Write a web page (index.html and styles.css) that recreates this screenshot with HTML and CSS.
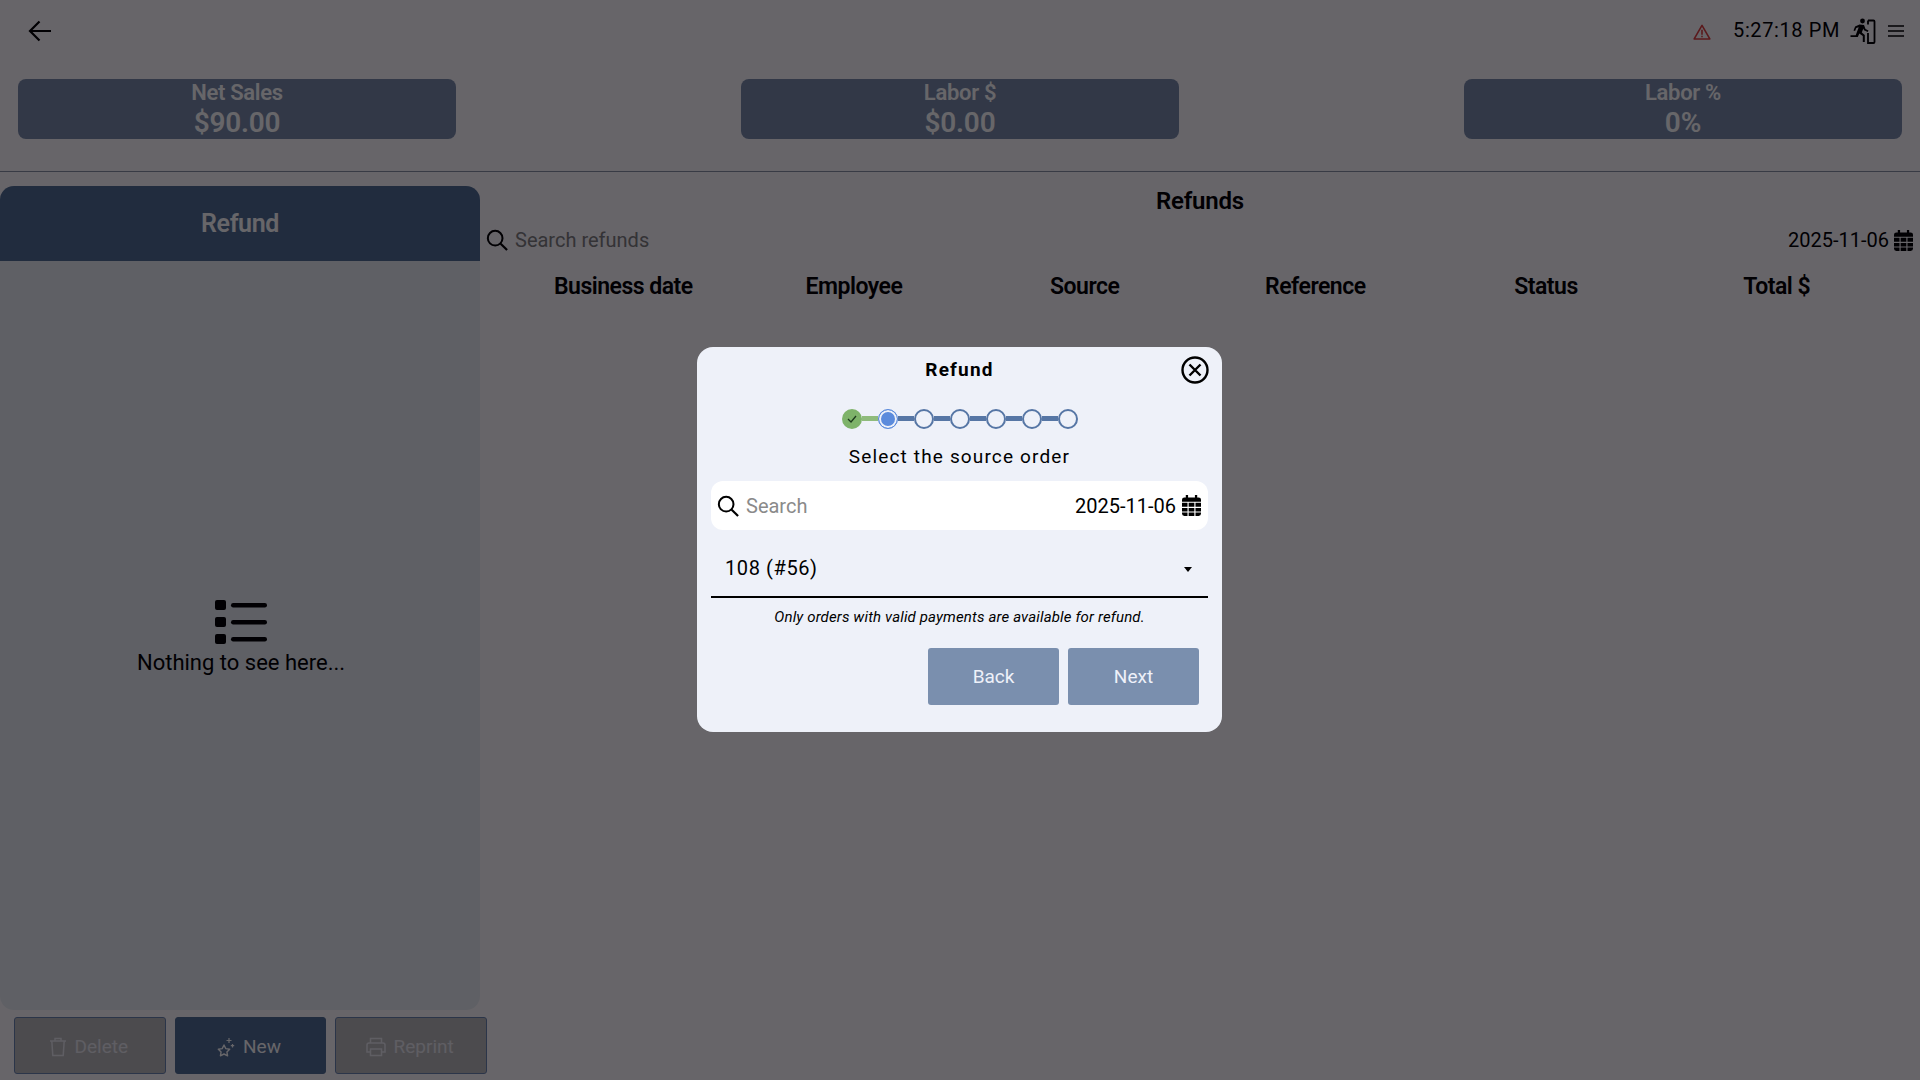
FILE: index.html
```html
<!DOCTYPE html>
<html>
<head>
<title>Refunds</title>
<link rel="stylesheet" href="styles.css">
</head>
<body>
<svg class="defs" width="0" height="0">
    <symbol id="search" viewBox="0 0 24 24"><circle cx="10" cy="10" r="8" fill="none" stroke="currentColor" stroke-width="2.2"/><path d="M16 16l7 7" fill="none" stroke="currentColor" stroke-width="2.4"/></symbol>
    <symbol id="calendar" viewBox="0 0 20 22"><path d="M4 0h2.400v2.500h7.200V0H16v2.500h1.500A2.500 2.500 0 0 1 20 5v2H0V5a2.500 2.500 0 0 1 2.500-2.500H4z"/><path d="M0 8.200h5.800v4.200H0zM7 8.200h6v4.200H7zM14.200 8.200H20v4.200h-5.800zM0 13.500h5.800v3.700H0zM7 13.500h6v3.700H7zM14.200 13.500H20v3.700h-5.800zM0 18.300h5.800V22H2.500A2.500 2.500 0 0 1 0 19.500zM7 18.300h6V22H7zM14.200 18.300H20v1.200a2.500 2.500 0 0 1-2.500 2.500h-3.300z"/></symbol>
</svg>

<div class="app">
    <header class="topbar">
        <svg class="back" width="24" height="22" viewBox="0 0 24 22"><path d="M23 11H2M11.500 1.500L2 11l9.500 9.500" fill="none" stroke="#000" stroke-width="2.200"/></svg>
        <div class="status">
            <svg class="warn" width="18" height="16" viewBox="0 0 20 18"><path d="M10 1.500L1.200 16.800h17.600z" fill="none" stroke="#e04040" stroke-width="1.800" stroke-linejoin="round"/><path d="M10 6.500v5.500M10 13.200v1.600" stroke="#e04040" stroke-width="1.800"/></svg>
            <span class="clock">5:27:18 PM</span>
            <svg class="exit" width="28" height="26" viewBox="0 0 28 26"><path d="M20 2.500h5.500a1 1 0 0 1 1 1v20.500a1 1 0 0 1-1 1H20v-1.500M20 2.500v4M20 15v9" fill="none" stroke="#000" stroke-width="1.800"/><circle cx="14.500" cy="3" r="2.400"/><path d="M11.500 6.500l4.500.5 1.500 4 3 1.500-.8 1.400-3.700-1.700-.7-1.600-1.500 4 3 2.500v7h-2v-6l-3.500-2.500-1.500 3.500H2.500v-1.800h5.200l3-8-2.400.8-1.200 3-1.600-.6 1.600-4z"/></svg>
            <svg class="menu" width="16" height="12" viewBox="0 0 16 12"><path d="M0 1h16M0 6h16M0 11h16" stroke="#000" stroke-width="1.500"/></svg>
        </div>
    </header>

    <section class="stats">
        <div class="stat"><div class="stat-label">Net Sales</div><div class="stat-value">$90.00</div></div>
        <div class="stat"><div class="stat-label">Labor $</div><div class="stat-value">$0.00</div></div>
        <div class="stat"><div class="stat-label">Labor %</div><div class="stat-value">0%</div></div>
    </section>

    <div class="main">
        <aside class="side">
            <div class="panel">
                <div class="panel-head">Refund</div>
                <div class="empty">
                    <svg class="empty-icon" width="52" height="44" viewBox="0 0 52 44"><rect x="0" y="0" width="11" height="10" rx="2"/><rect x="0" y="17" width="11" height="10" rx="2"/><rect x="0" y="34" width="11" height="10" rx="2"/><rect x="16" y="3" width="36" height="4.500" rx="2.200"/><rect x="16" y="20" width="36" height="4.500" rx="2.200"/><rect x="16" y="37" width="36" height="4.500" rx="2.200"/></svg>
                    <div class="empty-text">Nothing to see here...</div>
                </div>
            </div>
            <div class="actions">
                <button class="act">
                    <svg width="18" height="20" viewBox="0 0 18 20"><path d="M1 4h16M6 4V1.500h6V4M2.800 4l1 14.500h10.400l1-14.500" fill="none" stroke="currentColor" stroke-width="1.500"/></svg>
                    Delete
                </button>
                <button class="act act-main">
                    <svg width="18" height="20" viewBox="0 0 18 20"><path d="M7 8l1.800 3.600 3.900.6-2.800 2.700.7 3.900L7 17l-3.600 1.800.7-3.900-2.800-2.700 3.900-.6z" fill="none" stroke="currentColor" stroke-width="1.400" stroke-linejoin="round"/><path d="M12 1v5M9.500 3.500h5M15.500 7v3.500M13.800 8.700h3.400" stroke="currentColor" stroke-width="1.200"/></svg>
                    New
                </button>
                <button class="act">
                    <svg width="20" height="20" viewBox="0 0 20 20"><path d="M4.500 6V1.500h11V6M4.500 15H1V8a2 2 0 0 1 2-2h14a2 2 0 0 1 2 2v7h-3.500M4.500 12h11v6.500h-11z" fill="none" stroke="currentColor" stroke-width="1.500"/></svg>
                    Reprint
                </button>
            </div>
        </aside>

        <section class="refunds">
            <h2 class="refunds-title">Refunds</h2>
            <div class="filter">
                <svg class="ico-search"><use href="#search"/></svg>
                <span class="filter-text">Search refunds</span>
                <span class="filter-date">2025-11-06</span>
                <svg class="ico-cal"><use href="#calendar"/></svg>
            </div>
            <div class="cols">
                <div>Business date</div>
                <div>Employee</div>
                <div>Source</div>
                <div>Reference</div>
                <div>Status</div>
                <div>Total $</div>
            </div>
        </section>
    </div>
</div>

<div class="overlay">
    <div class="modal">
        <div class="modal-head">
            <span class="modal-title">Refund</span>
            <svg class="close" width="28" height="28" viewBox="0 0 28 28"><circle cx="14" cy="14" r="12.500" fill="none" stroke="#000" stroke-width="2.400"/><path d="M8.500 8.500l11 11M19.500 8.500l-11 11" stroke="#000" stroke-width="2.400"/></svg>
        </div>
        <div class="stepper">
            <span class="step step-done"><svg width="10" height="8" viewBox="0 0 10 8"><path d="M1 4l3 3 5-6" fill="none" stroke="#1c3a1c" stroke-width="1.300"/></svg></span>
            <span class="link link-done"></span>
            <span class="step step-now"></span>
            <span class="link"></span>
            <span class="step"></span>
            <span class="link"></span>
            <span class="step"></span>
            <span class="link"></span>
            <span class="step"></span>
            <span class="link"></span>
            <span class="step"></span>
            <span class="link"></span>
            <span class="step"></span>
        </div>
        <div class="modal-sub">Select the source order</div>
        <div class="searchbox">
            <svg class="ico-search"><use href="#search"/></svg>
            <span class="searchbox-text">Search</span>
            <span class="searchbox-date">2025-11-06</span>
            <svg class="ico-cal"><use href="#calendar"/></svg>
        </div>
        <div class="select">
            <span>108 (#56)</span>
            <span class="caret"></span>
        </div>
        <div class="note">Only orders with valid payments are available for refund.</div>
        <div class="modal-btns">
            <button class="btn">Back</button>
            <button class="btn">Next</button>
        </div>
    </div>
</div>
</body>
</html>
```

FILE: styles.css
```css
html, body{
    margin: 0;
    height: 100%;
}
body{
    background-color: #fffcff;
    color: #000;
    font-family: Roboto, "Liberation Sans", sans-serif;
    overflow: hidden;
}
.defs{
    position: absolute;
}
.app{
    height: 1080px;
    display: flex;
    flex-direction: column;
}

.topbar{
    height: 61px;
    padding: 0 16px 0 28px;
    display: flex;
    align-items: center;
    justify-content: space-between;
}
.back{
    margin-top: 1px;
}
.status{
    display: flex;
    align-items: center;
}
.warn{
    margin-right: 22px;
    margin-top: 2px;
}
.clock{
    font-size: 20px;
    letter-spacing: 0.6px;
    margin-right: 8px;
    margin-top: -1px;
}
.exit{
    margin-top: 1px;
    margin-right: 12px;
}

.stats{
    margin-top: 18px;
    padding: 0 18px 32px;
    display: flex;
    justify-content: space-between;
    border-bottom: 1px solid #8a93a6;
}
.stat{
    width: 438px;
    height: 60px;
    box-sizing: border-box;
    padding-top: 1px;
    border-radius: 8px;
    background-color: #7a8caa;
    color: #fff;
    text-align: center;
    font-weight: 600;
}
.stat-label{
    font-size: 22px;
    line-height: 26px;
    letter-spacing: -0.3px;
}
.stat-value{
    font-size: 28px;
    line-height: 33px;
    letter-spacing: -0.2px;
}

.main{
    flex: 1;
    display: flex;
    min-height: 0;
    padding-top: 14px;
}
.side{
    width: 480px;
    flex-shrink: 0;
    display: flex;
    flex-direction: column;
}
.panel{
    height: 824px;
    background-color: #ecf1f5;
    border-radius: 14px;
    display: flex;
    flex-direction: column;
}
.panel-head{
    height: 75px;
    line-height: 75px;
    background-color: #506e94;
    color: #fff;
    border-radius: 14px 14px 0 0;
    text-align: center;
    font-size: 25px;
    font-weight: 600;
    letter-spacing: -0.4px;
}
.empty{
    flex: 1;
    display: flex;
    flex-direction: column;
    align-items: center;
    padding-top: 339px;
}
.empty-icon{
    margin-left: 2px;
}
.empty-text{
    font-size: 22px;
    line-height: 27px;
    margin: 5px 0 0 2px;
}
.actions{
    width: 473px;
    margin: 7px 0 0 14px;
    display: flex;
    gap: 9px;
    flex-shrink: 0;
}
.act{
    flex: 1;
    height: 57px;
    padding: 2px 3px 0 0;
    border: 1px solid #6a85b0;
    border-radius: 3px;
    background-color: #bcbcbc;
    color: #eaeaf0;
    font-family: inherit;
    font-size: 19px;
    display: flex;
    align-items: center;
    justify-content: center;
    gap: 8px;
}
.act-main{
    background-color: #506e94;
    border-color: #506e94;
    color: #fff;
}

.refunds{
    flex: 1;
    padding: 0 6px;
    min-width: 0;
}
.refunds-title{
    margin: 0;
    padding-top: 1px;
    text-align: center;
    font-size: 24px;
    font-weight: 600;
    line-height: 28px;
    letter-spacing: -0.2px;
}
.filter{
    margin-top: 11px;
    padding-right: 1px;
    display: flex;
    align-items: center;
    height: 28px;
}
.ico-search{
    width: 22px;
    height: 22px;
    flex-shrink: 0;
}
.ico-cal{
    width: 19px;
    height: 21px;
    flex-shrink: 0;
}
.filter-text{
    flex: 1;
    margin-left: 7px;
    font-size: 20px;
    color: #808080;
}
.filter-date{
    font-size: 20px;
    margin-right: 5px;
}
.cols{
    margin-top: 19px;
    padding: 0 22px;
    display: grid;
    grid-template-columns: repeat(6, 1fr);
    text-align: center;
    font-size: 23px;
    font-weight: 600;
    line-height: 28px;
    letter-spacing: -0.5px;
}

.overlay{
    position: absolute;
    top: 0;
    left: 0;
    width: 100%;
    height: 100%;
    box-sizing: border-box;
    padding: 0 1px 2px 0;
    background-color: rgba(2, 0, 5, 0.6);
    display: flex;
    align-items: center;
    justify-content: center;
}
.modal{
    width: 525px;
    height: 385px;
    box-sizing: border-box;
    padding: 8px 14px 0;
    background-color: #eef1f9;
    border-radius: 16px;
}
.modal-head{
    height: 28px;
    display: flex;
    align-items: center;
    justify-content: center;
    position: relative;
}
.modal-title{
    font-size: 19px;
    font-weight: 700;
    letter-spacing: 1.2px;
    padding-top: 1px;
}
.close{
    position: absolute;
    right: -1px;
    top: 1px;
}
.stepper{
    margin-top: 26px;
    display: flex;
    align-items: center;
    justify-content: center;
    height: 20px;
}
.step{
    box-sizing: border-box;
    width: 20px;
    height: 20px;
    border: 2px solid #5676a5;
    border-radius: 50%;
    flex-shrink: 0;
    display: flex;
    align-items: center;
    justify-content: center;
}
.step-done{
    background-color: #7eb36a;
    border-color: #7eb36a;
}
.step-now{
    border: 1px solid #5b8bdc;
    background-color: #5b8bdc;
    box-shadow: inset 0 0 0 2px #eef1f9;
}
.link{
    width: 16px;
    height: 5px;
    background-color: #5676a5;
}
.link-done{
    background-color: #8fbb7c;
}
.modal-sub{
    margin-top: 16px;
    text-align: center;
    font-size: 19px;
    line-height: 23px;
    letter-spacing: 1.15px;
}
.searchbox{
    margin-top: 13px;
    height: 49px;
    box-sizing: border-box;
    padding: 1px 7px 0 6px;
    background-color: #fff;
    border-radius: 12px;
    display: flex;
    align-items: center;
}
.searchbox-text{
    flex: 1;
    margin-left: 7px;
    font-size: 20px;
    color: #8a8a8a;
}
.searchbox-date{
    font-size: 20px;
    margin-right: 6px;
}
.select{
    height: 68px;
    box-sizing: border-box;
    padding: 10px 16px 0 14px;
    border-bottom: 2px solid #000;
    display: flex;
    align-items: center;
    justify-content: space-between;
    font-size: 20px;
    letter-spacing: 0.6px;
}
.caret{
    width: 0;
    height: 0;
    border-left: 4.500px solid transparent;
    border-right: 4.500px solid transparent;
    border-top: 5px solid #000;
    margin-top: 3px;
}
.note{
    margin-top: 10px;
    text-align: center;
    font-size: 15px;
    line-height: 18px;
    font-style: italic;
    letter-spacing: 0.15px;
}
.modal-btns{
    margin-top: 22px;
    padding-right: 9px;
    display: flex;
    justify-content: flex-end;
    gap: 9px;
}
.btn{
    width: 131px;
    height: 57px;
    border: none;
    border-radius: 3px;
    background-color: #7a8fae;
    color: #eef1f9;
    font-family: inherit;
    font-size: 19px;
}
```
